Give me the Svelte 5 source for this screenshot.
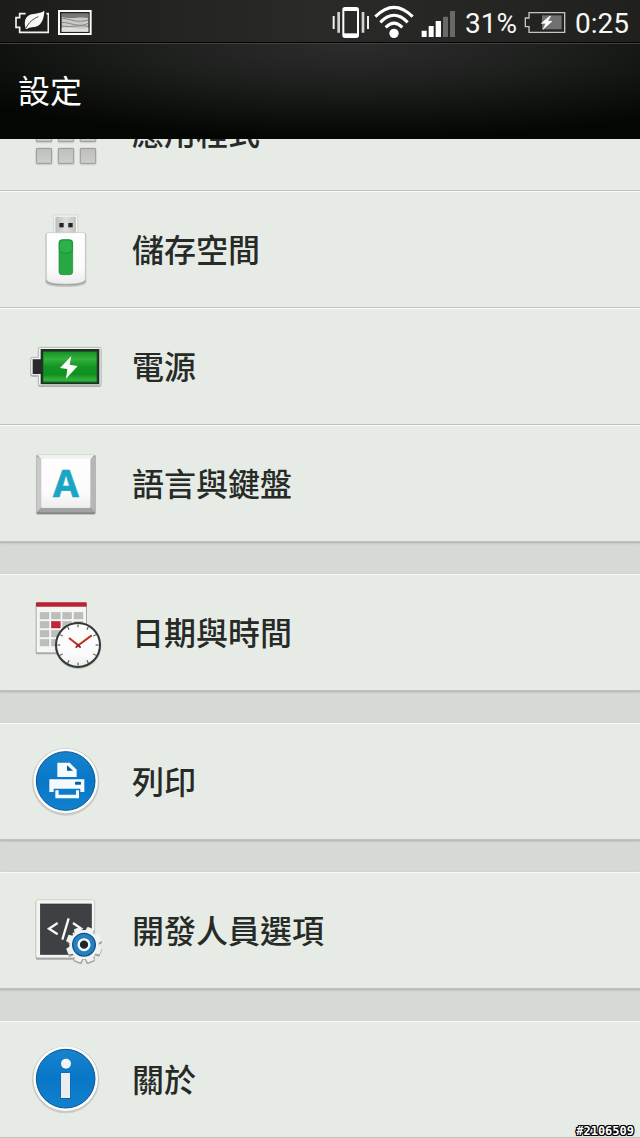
<script lang="ts">
  type Item = { icon: string; label: string; view: string };

  const groups: Item[][] = [
    [
      { icon: 'apps', label: '應用程式', view: '0 0 300 270' },
      { icon: 'storage', label: '儲存空間', view: '0 15 300 270' },
      { icon: 'power', label: '電源', view: '0 6 300 270' },
      { icon: 'keyboard', label: '語言與鍵盤', view: '0 -4 300 270' },
    ],
    [{ icon: 'date', label: '日期與時間', view: '0 -6 300 270' }],
    [{ icon: 'print', label: '列印', view: '0 5 300 270' }],
    [{ icon: 'developer', label: '開發人員選項', view: '0 4 300 270' }],
    [{ icon: 'about', label: '關於', view: '0 -2 300 270' }],
  ];

  const steps = [0, 1, 2];
  const ticks = Array.from({ length: 12 }, (_, i) => i * 30);
  const teeth = Array.from({ length: 8 }, (_, i) => i * 45);
</script>

<svelte:head><title>設定</title></svelte:head>

<div class="screen">
  <div class="status">
    <div class="side">
      <svg width="34" height="44" viewBox="44 0 102 132" aria-hidden="true">
        <path d="M76 41H58V53H47V82H58V97H144V41H138" fill="none" stroke="#f4f4f0" stroke-width="5" />
        <path d="M76 86C70 66 74 48 94 43C108 39 122 40 132 32C132 50 126 70 112 78C101 84 89 79 80 87Z" fill="#f8f8f4" />
        <path d="M77 84C86 66 98 57 114 50" fill="none" stroke="#41423f" stroke-width="3" />
      </svg>
      <svg width="34" height="44" viewBox="174 0 102 132" aria-hidden="true">
        <rect x="177" y="33" width="95" height="69" fill="#222321" stroke="#fafaf7" stroke-width="6" />
        <rect x="185" y="41" width="80" height="54" fill="#c9c9c7" />
        <path d="M185 41H265V54C240 48 215 60 185 50Z" fill="#777876" />
        <path d="M185 54C215 58 230 70 265 60M185 68C205 64 235 86 265 70M185 78C220 84 240 72 265 80" fill="none" stroke="#858583" stroke-width="3" />
        <path d="M185 84C220 78 240 94 265 84V95H185Z" fill="#dededc" />
      </svg>
    </div>
    <div class="side">
      <svg class="vibrate" width="38" height="44" viewBox="38 0 114 132" aria-hidden="true">
        <rect x="69" y="21" width="50" height="93" rx="8" fill="#fff" />
        <rect x="75" y="33" width="38" height="67" fill="#292a28" />
        <path d="M43 48V87M146 48V87" stroke="#f0f0ee" stroke-width="6" />
        <path d="M58 36V98M131 36V98" stroke="#d2d2d0" stroke-width="8" />
      </svg>
      <svg class="wifi" width="40" height="44" viewBox="164 0 120 132" aria-hidden="true">
        <circle cx="224" cy="100" r="14" fill="#fff" />
        <path d="M168 50Q224 -6 280 50M183 67Q224 25 265 67M199 82Q224 57 249 82" fill="none" stroke="#fff" stroke-width="9" />
      </svg>
      <svg class="signal" width="35" height="44" viewBox="307 0 105 132" aria-hidden="true">
        <path d="M309 92H324V111H309ZM330 78H345V111H330ZM351 63H367V111H351Z" fill="#fff" />
        <path d="M373 50H388V111H373ZM394 33H409V111H394Z" fill="#696a68" />
      </svg>
      <span class="percent">31%</span>
      <svg class="battery" width="42" height="44" viewBox="611 0 126 132" aria-hidden="true">
        <rect x="665" y="46" width="59" height="42" fill="#707170" />
        <path d="M626 38H733V97H626V80H615V54H626Z" fill="none" stroke="#c5c5c2" stroke-width="4" />
        <path d="M689 48L663 70H677L668 88L695 64H682L691 48Z" fill="#fff" stroke="#fff" stroke-width="2" />
      </svg>
      <span>0:25</span>
    </div>
  </div>
  <header><h1>設定</h1></header>

  <main>
    <div class="list">
      {#each groups as group}
        <ul>
          {#each group as item}
            <li>
              <button type="button">
                <svg width="100" height="90" viewBox={item.view} aria-hidden="true">
                  {#if item.icon === 'apps'}
                    {#each steps as r}
                      {#each steps as c}
                        <rect x={47 + c * 66} y={50 + r * 66} width="50" height="50" rx="4" fill="#b4b5b2" opacity=".5" />
                        <rect x={49 + c * 66} y={49 + r * 66} width="46" height="45" rx="2" fill="url(#tile)" stroke="#999a97" stroke-width="3" />
                      {/each}
                    {/each}
                  {:else if item.icon === 'storage'}
                    <rect x="101" y="45" width="72" height="60" rx="3" fill="#fafafa" stroke="#c4c6c3" stroke-width="2" />
                    <rect x="106" y="50" width="62" height="50" fill="url(#metal)" />
                    <rect x="118" y="69" width="13" height="13" fill="#242424" />
                    <rect x="145" y="69" width="13" height="13" fill="#242424" />
                    <path d="M82 98H193Q199 98 199 106V246Q197 261 137 261Q77 261 76 246V106Q76 98 82 98Z" fill="#9b9c99" opacity=".45" />
                    <path d="M84 99H191Q197 99 197 106V242Q195 256 137 256Q79 256 78 242V106Q78 99 84 99Z" fill="#9b9c99" />
                    <path d="M84 98H191Q196 98 196 105V238Q195 252 137 252Q80 252 79 238V105Q79 98 84 98Z" fill="url(#white)" stroke="#c9cbc8" stroke-width="2" />
                    <rect x="117" y="119" width="41" height="105" rx="9" fill="#27a843" stroke="#168b30" stroke-width="2" />
                    <path d="M118 130Q118 120 128 120H148Q157 120 157 130V150Q156 159 138 159Q119 159 118 150Z" fill="#2bb04a" stroke="#128a2e" stroke-width="2" />
                  {:else if item.icon === 'power'}
                    <path d="M61 83H237Q244 83 244 90V194Q244 201 237 201H61Q54 201 54 195V170H38Q31 170 31 164V119Q31 112 38 112H54V90Q54 83 61 83Z" fill="#aaaba8" />
                    <path d="M61 82H237Q243 82 243 88V191Q243 197 237 197H61Q55 197 55 192V166H38Q32 166 32 160V118Q32 112 38 112H55V88Q55 82 61 82Z" fill="#f3f4f2" stroke="#b4b6b3" stroke-width="3" />
                    <path d="M38 118H62V87H238V193H62V162H38Z" fill="#27292a" />
                    <rect x="69" y="94" width="162" height="93" fill="url(#green)" stroke="#075d16" stroke-width="2" />
                    <path d="M154 108L120 144L142 147L138 176L173 138L149 134Z" fill="#fafff9" />
                  {:else if item.icon === 'keyboard'}
                    <rect x="48" y="45" width="179" height="179" rx="6" fill="#858784" opacity=".4" />
                    <rect x="49" y="43" width="177" height="178" rx="5" fill="#858784" />
                    <path d="M49 46L66 57V201L49 217Z" fill="#c8c9c8" />
                    <path d="M226 46L210 57V201L226 217Z" fill="#b5b6b5" />
                    <path d="M51 43H224L210 59H66Z" fill="#eff0ef" />
                    <path d="M66 200H210L224 216H51Z" fill="#a1a2a1" />
                    <rect x="64" y="55" width="147" height="148" rx="4" fill="url(#white)" />
                    <text x="138" y="171" text-anchor="middle" class="letter">A</text>
                  {:else if item.icon === 'date'}
                    <rect x="47" y="38" width="154" height="155" rx="4" fill="#a7a9a6" />
                    <rect x="50" y="40" width="148" height="147" fill="#f5f6f4" />
                    <rect x="48" y="37" width="152" height="13" rx="2" fill="#b92435" />
                    {#each [0, 1, 2, 3] as r}
                      {#each [0, 1, 2, 3] as c}
                        <rect x={60 + c * 34} y={67 + r * 27} width="27" height="20" fill={r === 1 && c === 1 ? '#c22638' : '#bcbebc'} stroke={r === 1 && c === 1 ? '#a1192a' : '#afb1af'} stroke-width="1" />
                      {/each}
                    {/each}
                    <circle cx="174" cy="167" r="70" fill="#91939080" />
                    <circle cx="174" cy="165" r="66" fill="url(#white)" stroke="#353839" stroke-width="6" />
                    {#each ticks as a}
                      <path d="M174 103V112" stroke="#414344" stroke-width="3" transform="rotate({a} 174 165)" />
                    {/each}
                    <path d="M147 144L175 166L215 136" fill="none" stroke="#c32f20" stroke-width="6" />
                    <path d="M167 173L175 166L182 173" fill="none" stroke="#86281f" stroke-width="5" />
                    <circle cx="175" cy="166" r="5" fill="#a32a20" />
                  {:else if item.icon === 'print' || item.icon === 'about'}
                    {@const cy = item.icon === 'print' ? 137 : 129}
                    <circle cx="137" cy={cy + 3} r="101" fill="#b0b2af" opacity=".55" />
                    <circle cx="137" cy={cy + 1} r="99" fill="#c6c8c5" />
                    <circle cx="137" cy={cy} r="97" fill="#fafbfa" />
                    <circle cx="137" cy={cy} r="88" fill="url(#blue)" stroke="#0a5793" stroke-width="3" />
                    {#if item.icon === 'print'}
                      <path d="M112 82H149L170 103V125H112Z" fill="#f5fafc" />
                      <path d="M141 90V106H159Z" fill="#085a95" />
                      <path d="M88 132H193V170H181V160H101V170H88Z" fill="#f5fafc" />
                      <rect x="165" y="139" width="18" height="9" rx="2" fill="#07629f" />
                      <path d="M106 165H116V178H168V165H177V189H106Z" fill="#f5fafc" />
                    {:else}
                      <circle cx="138" cy="86" r="15" fill="#0b5f9e" />
                      <circle cx="138" cy="84" r="15" fill="#f5f6f7" />
                      <rect x="122" y="111" width="29" height="79" fill="#0b5f9e" />
                      <rect x="123" y="112" width="27" height="75" fill="#eaecee" />
                    {/if}
                  {:else}
                    <rect x="47" y="46" width="178" height="179" rx="6" fill="#a5a7a4" />
                    <rect x="48" y="45" width="176" height="174" rx="6" fill="#f4f5f3" stroke="#c4c6c3" stroke-width="2" />
                    <rect x="61" y="58" width="153" height="151" fill="#3d4143" stroke="#2c3032" stroke-width="2" />
                    <path d="M113 115L87 132L113 149M146 101L127 165M159 115L184 132L159 149" fill="none" stroke="#f7f8f7" stroke-width="7" />
                    <g fill="#5c5f5d" opacity=".5">
                      {#each teeth as a}
                        <rect x="179" y="130" width="26" height="108" rx="4" transform="rotate({a + 22} 192 184)" />
                      {/each}
                    </g>
                    <g fill="#f2f3f1">
                      {#each teeth as a}
                        <path d="M179 145L182 126H202L205 145Z" transform="rotate({a + 22} 192 180)" />
                      {/each}
                      <circle cx="192" cy="180" r="44" />
                    </g>
                    <circle cx="192" cy="180" r="34" fill="#277fc0" stroke="#0b5590" stroke-width="4" />
                    <circle cx="192" cy="180" r="16" fill="#20262a" stroke="#f7f8f7" stroke-width="7" />
                  {/if}
                </svg>
                <span>{item.label}</span>
              </button>
            </li>
          {/each}
        </ul>
      {/each}
    </div>
  </main>
  <span class="stamp">#2106509</span>
</div>

<svg class="defs" width="0" height="0" aria-hidden="true">
  <defs>
    <linearGradient id="tile" x2="0" y2="1"><stop stop-color="#bebfbd" /><stop offset="1" stop-color="#cdcecc" /></linearGradient>
    <linearGradient id="metal"><stop stop-color="#bebebe" /><stop offset=".5" stop-color="#dedede" /><stop offset="1" stop-color="#c2c2c2" /></linearGradient>
    <linearGradient id="white" x2="0" y2="1"><stop stop-color="#fdfefd" /><stop offset=".7" stop-color="#fafbfa" /><stop offset="1" stop-color="#ececec" /></linearGradient>
    <linearGradient id="green" x2="0" y2="1"><stop stop-color="#168e22" /><stop offset=".25" stop-color="#34b13d" /><stop offset=".5" stop-color="#149426" /><stop offset=".75" stop-color="#119021" /><stop offset=".92" stop-color="#35b53e" /><stop offset="1" stop-color="#138b22" /></linearGradient>
    <linearGradient id="blue" x2="0" y2="1"><stop stop-color="#1783cf" /><stop offset=".5" stop-color="#0877c7" /><stop offset="1" stop-color="#1181cf" /></linearGradient>
  </defs>
</svg>

<style>
  :global(body) {
    margin: 0;
    background: #d6dad5;
  }
  .screen {
    position: relative;
    min-height: 100vh;
    overflow: hidden;
    font-family: Roboto, "Noto Sans CJK TC", sans-serif;
  }
  svg {
    display: block;
    flex: none;
  }
  .status {
    display: flex;
    justify-content: space-between;
    height: 42px;
    padding: 0 11px 0 15px;
    border-bottom: 1px solid #050505;
    background: linear-gradient(90deg, #1c1d1b, #2a2b29 50%, #20211f);
    color: #f7f7f4;
    font-size: 28px;
    line-height: 47px;
  }
  .side {
    display: flex;
    gap: 9px;
  }
  .vibrate {
    margin-right: -5px;
  }
  .wifi,
  .percent {
    margin-right: -2px;
  }
  header {
    height: 95px;
    border-top: 1px solid #41423f;
    background: radial-gradient(ellipse 75% 100% at 55% 0, #2c2c2c, #1d1f1d 45%, #040604 100%);
  }
  h1 {
    margin: 0;
    padding: 0 18px;
    color: #fff;
    font-size: 32px;
    font-weight: 400;
    line-height: 97px;
  }
  main {
    overflow: hidden;
  }
  .list {
    display: grid;
    gap: 32px;
    margin-top: -65px;
  }
  ul {
    margin: 0;
    padding: 0;
    list-style: none;
    background: #e7ebe6;
    box-shadow: 0 1px 2px #aaaeaa;
  }
  li {
    box-sizing: border-box;
    height: 117px;
    border-top: 1px solid #f7faf6;
    border-bottom: 1px solid #bfc3be;
  }
  button {
    display: flex;
    align-items: center;
    gap: 12px;
    width: 100%;
    height: 100%;
    padding: 0 20px;
    border: 0;
    background: none;
    color: #272b28;
    font: 500 32px/44px "Noto Sans CJK TC", sans-serif;
    text-align: left;
  }
  button span {
    padding-bottom: 4px;
  }
  .letter {
    fill: #1ba5c4;
    stroke: #1ba5c4;
    stroke-width: 2px;
    font: 700 112px "Open Sans", sans-serif;
  }
  .stamp {
    position: absolute;
    right: 6px;
    bottom: 0;
    color: #fff;
    font: 700 12px/14px "DejaVu Sans Mono", monospace;
    text-shadow: 1px 0 #000, -1px 0 #000, 0 1px #000, 0 -1px #000, 1px 1px #000, -1px -1px #000, 1px -1px #000, -1px 1px #000;
  }
  .defs {
    position: absolute;
  }
</style>
